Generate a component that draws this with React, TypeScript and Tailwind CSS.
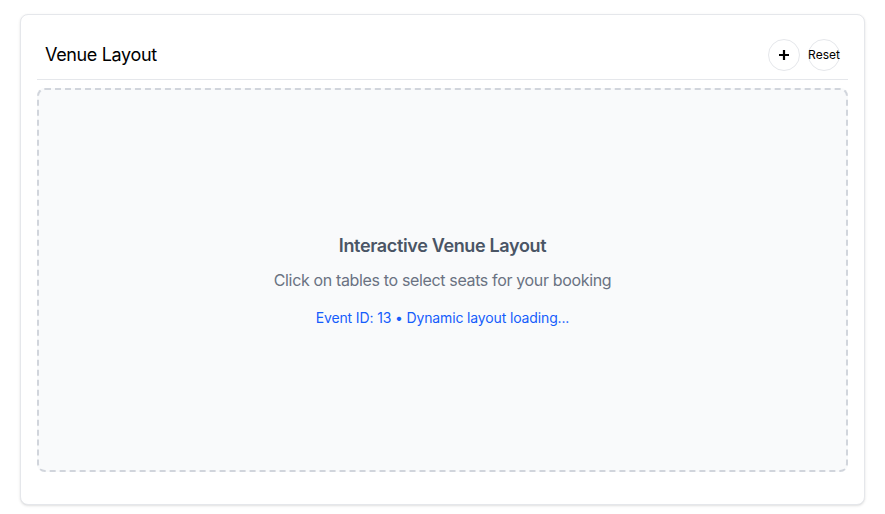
import React from "react";

export default function App() {
  return (
    <div className="min-h-screen bg-white pt-[14px] px-5 tracking-[-0.022em]" style={{ fontFamily: "Inter, 'Noto Sans', sans-serif" }}>
      <div className="w-[845px] rounded-lg border border-gray-200 bg-white shadow-sm px-4 pt-4 pb-8">
        <div className="flex items-center justify-between border-b border-gray-200 px-2 py-2">
          <h2 className="text-lg text-black">Venue Layout</h2>
          <div className="flex items-center gap-2">
            <button className="flex h-8 w-8 items-center justify-center rounded-full border border-gray-200 bg-white text-black">
              <svg width="12" height="12" viewBox="0 0 12 12">
                <path d="M6 1v10M1 6h10" stroke="black" strokeWidth="2.2" />
              </svg>
            </button>
            <button className="flex h-8 w-8 items-center justify-center rounded-full border border-gray-200 bg-white text-xs text-black tracking-normal">
              Reset
            </button>
          </div>
        </div>
        <div className="mt-2 flex h-96 flex-col items-center justify-center rounded-lg border-2 border-dashed border-gray-300 bg-gray-50">
          <h3 className="mb-2 text-lg font-semibold text-gray-600">Interactive Venue Layout</h3>
          <p className="mb-4 text-base text-gray-500">Click on tables to select seats for your booking</p>
          <p className="text-sm text-blue-600 tracking-[-0.01em]">Event ID: 13 • Dynamic layout loading...</p>
        </div>
      </div>
    </div>
  );
}
